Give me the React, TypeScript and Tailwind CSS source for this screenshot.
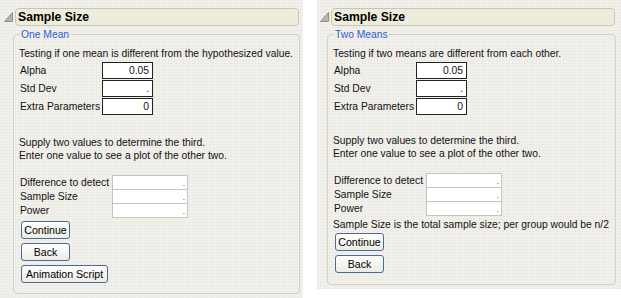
import React from "react";

const grid =
  "bg-[#f2f1ec] bg-[linear-gradient(to_right,rgba(0,0,0,0.018)_1px,transparent_1px),linear-gradient(to_bottom,rgba(0,0,0,0.018)_1px,transparent_1px)] bg-[length:3px_3px]";

function Disclosure() {
  return (
    <svg width="9" height="10" viewBox="0 0 9 10" className="shrink-0">
      <polygon points="8.5,0.5 8.5,9.5 0.5,9.5" fill="#b4b4b0" stroke="#8e8e8a" strokeWidth="1" />
    </svg>
  );
}

function ParamRow({ label, value }: { label: string; value: string }) {
  return (
    <div className="flex items-center h-[17px]">
      <span className="w-[83px] pl-[1px]">{label}</span>
      <div className="w-[51px] h-[17px] border border-[#222] bg-white flex items-center justify-end pr-[3px]">
        {value}
      </div>
    </div>
  );
}

function SolveRow({ label, first }: { label: string; first?: boolean }) {
  return (
    <div className={`flex items-center h-[15px] ${first ? "" : "-mt-px"}`}>
      <span className="w-[93px] pl-[1px] whitespace-nowrap">{label}</span>
      <div className="w-[76px] h-[15px] border border-[#c4c4c0] bg-white flex items-end justify-end pr-[2px] text-[8px] leading-[11px]">
        .
      </div>
    </div>
  );
}

function Btn({ children, w }: { children: React.ReactNode; w?: string }) {
  return (
    <button
      className={`${w ?? "px-[4px]"} h-[18px] rounded-[3px] border border-[#4a6b98] bg-[linear-gradient(#ffffff,#ecebe4)] text-[10.6px] leading-[16px] text-black text-center`}
    >
      {children}
    </button>
  );
}

function Panel({
  legend,
  testing,
  note,
  anim,
  outer,
  head,
  group,
  gapTop,
  btnGap,
  padBottom,
}: {
  legend: string;
  testing: string;
  note?: string;
  anim?: boolean;
  outer: string;
  head: string;
  group: string;
  gapTop: string;
  btnGap: string;
  padBottom: string;
}) {
  return (
    <div className={`${outer} ${grid} font-['Liberation_Sans',Arial,sans-serif] text-[10.3px] leading-[13px] text-[#111]`}>
      <div className={`flex items-center gap-[2px] pt-[8px] ${head}`}>
        <Disclosure />
        <div className="flex-1 h-[18px] rounded-[4px] border border-[#c8c6b2] bg-[#eeecdb] flex items-center pl-[2px]">
          <span className="text-[12.2px] font-bold text-black leading-[14px]">Sample Size</span>
        </div>
      </div>
      <fieldset className={`${group} mt-[2px] rounded-[4px] border border-[#d3d2c8] pl-[5px] ${padBottom}`}>
        <legend className="ml-[1px] px-[1px] text-[#2f5fd0] leading-[13px]">{legend}</legend>
        <div className="pt-[6px]">{testing}</div>
        <div className="mt-[2px] flex flex-col gap-[1px]">
          <ParamRow label="Alpha" value="0.05" />
          <ParamRow label="Std Dev" value="." />
          <ParamRow label="Extra Parameters" value="0" />
        </div>
        <div className={gapTop}>
          <div>Supply two values to determine the third.</div>
          <div>Enter one value to see a plot of the other two.</div>
        </div>
        <div className="mt-[13px] flex flex-col">
          <SolveRow label="Difference to detect" first />
          <SolveRow label="Sample Size" />
          <SolveRow label="Power" />
        </div>
        {note && <div className="mt-[2px]">{note}</div>}
        <div className={`flex flex-col items-start pl-[2px] ${btnGap}`}>
          <Btn w="w-[49px]">Continue</Btn>
          <Btn w="w-[49px]">Back</Btn>
          {anim && <Btn>Animation Script</Btn>}
        </div>
      </fieldset>
    </div>
  );
}

export default function App() {
  return (
    <div className="w-[621px] h-[298px] bg-white flex items-start gap-[14px] overflow-hidden">
      <Panel
        legend="One Mean"
        testing="Testing if one mean is different from the hypothesized value."
        anim
        outer="w-[303px] h-[298px] pl-[4px]"
        head="pr-[4px]"
        group="ml-[9px] mr-[3px] h-[266px]"
        gapTop="mt-[21px]"
        btnGap="mt-[3px] gap-[4px]"
        padBottom="pb-[10px]"
      />
      <Panel
        legend="Two Means"
        testing="Testing if two means are different from each other."
        note="Sample Size is the total sample size; per group would be n/2"
        outer="w-[304px] h-[289px] pl-[3px]"
        head="pr-[6px]"
        group="ml-[7px] mr-[5px] h-[257px]"
        gapTop="mt-[19px]"
        btnGap="mt-[2px] gap-[4px]"
        padBottom="pb-[10px]"
      />
    </div>
  );
}
